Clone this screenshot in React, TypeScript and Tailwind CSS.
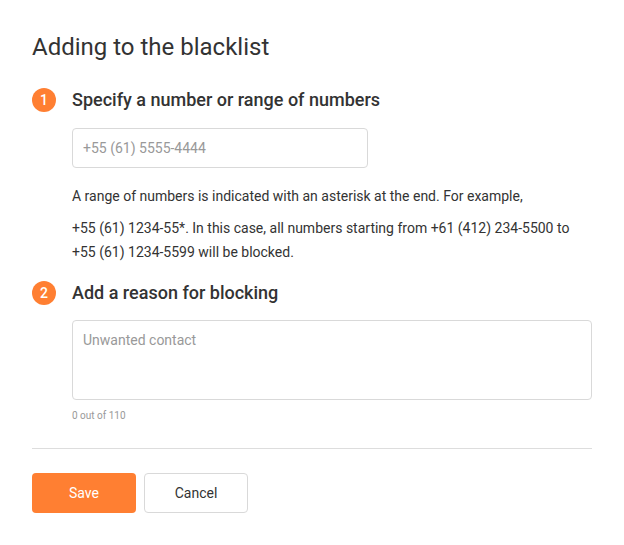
export default function App() {
  return (
    <div className="min-h-screen bg-white text-[#333333]" style={{ fontFamily: 'Roboto, "Liberation Sans", sans-serif' }}>
      <div className="w-[592px] pl-8 pt-[32px]">
        <h1 className="text-[24px] leading-[30px] font-normal text-[#333333]">Adding to the blacklist</h1>

        <div className="mt-[26px] flex items-center gap-4">
          <span className="flex h-6 w-6 items-center justify-center rounded-full bg-[#ff7f32] text-sm font-medium text-white">1</span>
          <h2 className="text-[18px] leading-6 font-medium">Specify a number or range of numbers</h2>
        </div>

        <div className="pl-10">
          <input
            className="mt-4 h-10 w-[296px] rounded border border-[#d9d9d9] px-2.5 text-sm text-[#333333] placeholder:text-[#999999] outline-none"
            placeholder="+55 (61) 5555-4444"
          />
          <p className="mt-4 text-sm leading-6">A range of numbers is indicated with an asterisk at the end. For example,</p>
          <p className="mt-2 text-sm leading-6">
            +55 (61) 1234-55*. In this case, all numbers starting from +61 (412) 234-5500 to +55 (61) 1234-5599 will be blocked.
          </p>
        </div>

        <div className="mt-[17px] flex items-center gap-4">
          <span className="flex h-6 w-6 items-center justify-center rounded-full bg-[#ff7f32] text-sm font-medium text-white">2</span>
          <h2 className="text-[18px] leading-6 font-medium">Add a reason for blocking</h2>
        </div>

        <div className="pl-10">
          <textarea
            className="mt-[15px] block h-20 w-full resize-none rounded border border-[#d9d9d9] px-2.5 pt-[11px] text-sm leading-4 text-[#333333] placeholder:text-[#999999] outline-none"
            placeholder="Unwanted contact"
          />
          <div className="mt-[9px] text-[10px] leading-[14px] text-[#999999]">0 out of 110</div>
        </div>

        <div className="mt-[25px] h-px bg-[#dddddd]" />

        <div className="mt-6 flex gap-2">
          <button className="h-10 w-[104px] rounded bg-[#ff7f32] text-sm text-white">Save</button>
          <button className="h-10 w-[104px] rounded border border-[#d9d9d9] bg-white text-sm text-[#333333]">Cancel</button>
        </div>
      </div>
    </div>
  );
}
